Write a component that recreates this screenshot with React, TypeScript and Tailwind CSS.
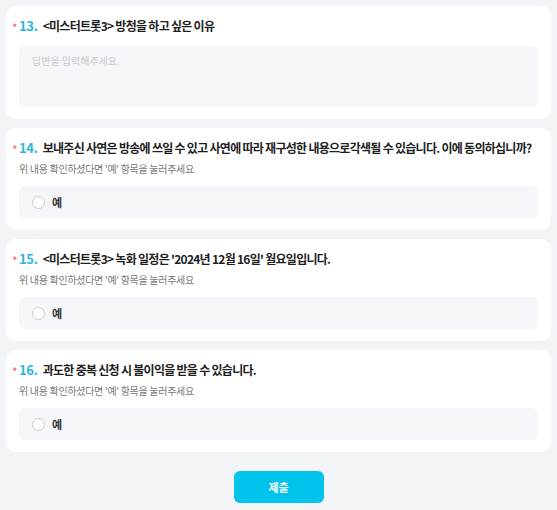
import React from "react";

const font = { fontFamily: '"Noto Sans CJK KR", "Noto Sans", sans-serif' };

type Question = {
  no: number;
  title: string;
  hint?: string;
  kind: "text" | "radio";
};

const questions: Question[] = [
  { no: 13, title: "<미스터트롯3> 방청을 하고 싶은 이유", kind: "text" },
  {
    no: 14,
    title:
      "보내주신 사연은 방송에 쓰일 수 있고 사연에 따라 재구성한 내용으로각색될 수 있습니다. 이에 동의하십니까?",
    hint: "위 내용 확인하셨다면 '예' 항목을 눌러주세요",
    kind: "radio",
  },
  {
    no: 15,
    title: "<미스터트롯3> 녹화 일정은 '2024년 12월 16일' 월요일입니다.",
    hint: "위 내용 확인하셨다면 '예' 항목을 눌러주세요",
    kind: "radio",
  },
  {
    no: 16,
    title: "과도한 중복 신청 시 불이익을 받을 수 있습니다.",
    hint: "위 내용 확인하셨다면 '예' 항목을 눌러주세요",
    kind: "radio",
  },
];

const QuestionCard: React.FC<{ q: Question }> = ({ q }) => (
  <div className="rounded-[10px] bg-white px-[13px] pt-[12px] pb-[12px]">
    <h3 className="flex h-[16px] items-center whitespace-nowrap text-[12px] leading-[16px] font-bold tracking-[-0.72px] text-[#1e1e1e]">
      <span className="-ml-[7px] mt-[3px] w-[7px] text-[12px] leading-[16px] font-normal text-[#ff5b6e]">*</span>
      <span className="mr-[5px] text-[13px] leading-[16px] tracking-[-0.3px] text-[#2cb5df]">{q.no}.</span>
      <span className="leading-[16px]">{q.title}</span>
    </h3>

    {q.hint && (
      <p className="mt-[6px] h-[14px] text-[10px] leading-[14px] tracking-[-0.3px] text-[#777]">
        {q.hint}
      </p>
    )}

    {q.kind === "text" ? (
      <textarea
        placeholder="답변을 입력해주세요."
        className="mt-[12px] block h-[61px] w-full resize-none rounded-[6px] bg-[#f5f6fa] px-[13px] py-[7px] text-[10px] text-[#333] outline-none placeholder:text-[#c8c9cd]"
        style={font}
      />
    ) : (
      <label className="mt-[10px] flex h-[32px] items-center gap-[7px] rounded-[6px] bg-[#f5f6fa] pl-[13px]">
        <span className="h-[13px] w-[13px] rounded-full border border-[#c9cbd0] bg-white" />
        <span className="text-[11px] leading-[14px] font-bold text-[#333]">예</span>
      </label>
    )}
  </div>
);

const App: React.FC = () => {
  return (
    <div className="min-h-[510px] w-[557px] bg-[#f3f4f8] p-[6px]" style={font}>
      <div className="flex flex-col gap-[9px]">
        {questions.map((q) => (
          <QuestionCard key={q.no} q={q} />
        ))}
      </div>

      <div className="mt-[19px] flex justify-center">
        <button
          type="submit"
          className="h-[32px] w-[90px] rounded-[6px] bg-[#00c3ec] text-[11px] font-bold text-white"
        >
          제출
        </button>
      </div>
    </div>
  );
};

export default App;
